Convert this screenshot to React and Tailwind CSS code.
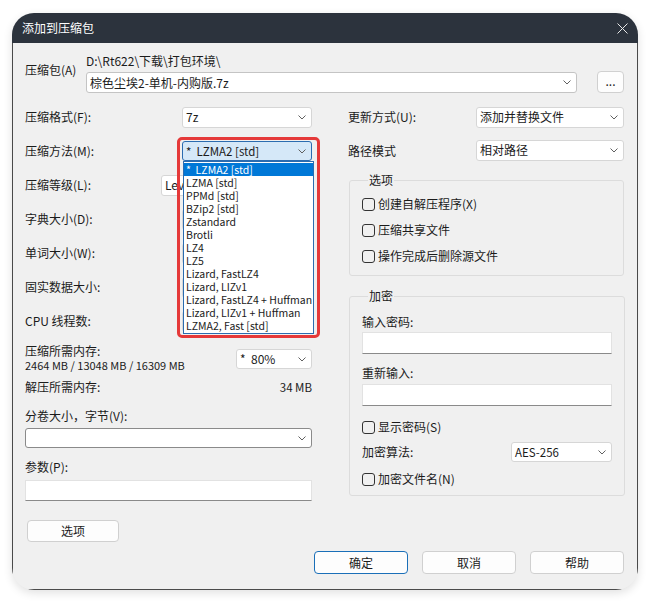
import React from 'react';

function Chevron() {
  return (
    <svg width="8" height="5" viewBox="0 0 8 5" className="shrink-0">
      <path d="M0.5 0.5 L4 4 L7.5 0.5" fill="none" stroke="#606060" strokeWidth="1" />
    </svg>
  );
}

function Combo({ className = '', children }) {
  return (
    <div className={`flex items-center justify-between rounded-[3px] border pl-[3px] pr-[5px] ${className}`}>
      <span className="whitespace-pre leading-[16px]">{children}</span>
      <Chevron />
    </div>
  );
}

function Check({ children }) {
  return (
    <div className="flex items-center gap-[3px]">
      <div className="h-[13px] w-[13px] shrink-0 rounded-[3px] border border-[#333333]" />
      <span className="leading-[16px]">{children}</span>
    </div>
  );
}

function Btn({ className = '', children }) {
  return (
    <div className={`flex items-center justify-center rounded-[4px] border bg-[#fdfdfd] leading-[16px] ${className}`}>
      {children}
    </div>
  );
}

const methods = [
  'LZMA [std]',
  'PPMd [std]',
  'BZip2 [std]',
  'Zstandard',
  'Brotli',
  'LZ4',
  'LZ5',
  'Lizard, FastLZ4',
  'Lizard, LIZv1',
  'Lizard, FastLZ4 + Huffman',
  'Lizard, LIZv1 + Huffman',
  'LZMA2, Fast [std]',
];

export default function App() {
  return (
    <div className="h-[602px] w-[650px] bg-white pl-[12px] pt-[13px] font-['Noto_Sans_CJK_SC','Noto_Sans',sans-serif] text-[12px] text-[#1b1b1b]">
      <div className="h-[577px] w-[626px] overflow-hidden rounded-[22px] bg-[#f0f0f0] shadow-[0_3px_10px_rgba(0,0,0,0.12)]">
        {/* title bar */}
        <div className="flex h-[30px] items-center justify-between bg-[#2c333d] pl-[10px] pr-[10px] text-white">
          <span className="leading-[16px]">添加到压缩包</span>
          <svg width="11" height="11" viewBox="0 0 11 11">
            <path d="M0.5 0.5 L10.5 10.5 M10.5 0.5 L0.5 10.5" stroke="#e8e8e8" strokeWidth="1" fill="none" />
          </svg>
        </div>

        {/* body */}
        <div className="relative h-[547px] border-x border-b border-[#4a4a4a] pl-[12px] pr-[13px]">
          {/* archive row */}
          <div className="flex h-[57px] pt-[11px]">
            <div className="w-[61px] pt-[8px] leading-[16px]">压缩包(A)</div>
            <div className="w-[491px]">
              <div className="-mt-[1px] h-[19px] leading-[16px]">D:\Rt622\下载\打包环境\</div>
              <Combo className="h-[21px] border-[#c4c4c4] bg-white">棕色尘埃2-单机-内购版.7z</Combo>
            </div>
            <Btn className="ml-[20px] mt-[17px] h-[22px] w-[27px] border-[#d0d0d0] pb-[3px]">...</Btn>
          </div>

          <div className="flex gap-[36px]">
            {/* left column */}
            <div className="w-[287px]">
              <div className="flex h-[34px] items-center justify-between">
                <span className="leading-[16px]">压缩格式(F):</span>
                <Combo className="h-[21px] w-[130px] border-[#d6d6d6] bg-white">7z</Combo>
              </div>
              <div className="flex h-[34px] items-center justify-between">
                <span className="leading-[16px]">压缩方法(M):</span>
                <Combo className="h-[20px] w-[130px] border-[#2b6cb0] bg-[#d5e8f8] text-[11.5px]">{'*  LZMA2 [std]'}</Combo>
              </div>
              <div className="flex h-[34px] items-center justify-between">
                <span className="leading-[16px]">压缩等级(L):</span>
                <Combo className="h-[21px] w-[151px] border-[#d6d6d6] bg-white">Level</Combo>
              </div>
              <div className="flex h-[34px] items-center justify-between">
                <span className="leading-[16px]">字典大小(D):</span>
                <Combo className="h-[21px] w-[130px] border-[#d6d6d6] bg-white">{''}</Combo>
              </div>
              <div className="flex h-[34px] items-center justify-between">
                <span className="leading-[16px]">单词大小(W):</span>
                <Combo className="h-[21px] w-[130px] border-[#d6d6d6] bg-white">{''}</Combo>
              </div>
              <div className="flex h-[34px] items-center justify-between">
                <span className="leading-[16px]">固实数据大小:</span>
                <Combo className="h-[21px] w-[130px] border-[#d6d6d6] bg-white">{''}</Combo>
              </div>
              <div className="flex h-[34px] items-center justify-between">
                <span className="leading-[16px]">CPU 线程数:</span>
                <Combo className="h-[21px] w-[130px] border-[#d6d6d6] bg-white">{''}</Combo>
              </div>
              <div className="flex h-[40px] items-start justify-between pt-[5px]">
                <div className="leading-[14px]">
                  <div className="leading-[16px]">压缩所需内存:</div>
                  <div className="-mt-[2px] text-[11px] leading-[16px]">2464 MB / 13048 MB / 16309 MB</div>
                </div>
                <Combo className="mt-[6px] h-[20px] w-[76px] border-[#d6d6d6] bg-white">{'*  80%'}</Combo>
              </div>
              <div className="flex h-[18px] items-center justify-between">
                <span className="leading-[16px]">解压所需内存:</span>
                <span className="text-[11.5px] leading-[16px]">34 MB</span>
              </div>
              <div className="h-[32px] pt-[12px] leading-[16px]">分卷大小，字节(V):</div>
              <Combo className="h-[20px] w-full border-[#8a8a8a] bg-white">{''}</Combo>
              <div className="h-[32px] pt-[11px] leading-[16px]">参数(P):</div>
              <div className="h-[21px] w-full border border-[#e2e2e2] border-b-[#8a8a8a] bg-white" />
              <Btn className="ml-[2px] mt-[19px] h-[22px] w-[92px] border-[#d0d0d0]">选项</Btn>
            </div>

            {/* right column */}
            <div className="w-[276px]">
              <div className="flex h-[34px] items-center justify-between">
                <span className="leading-[16px]">更新方式(U):</span>
                <Combo className="h-[21px] w-[148px] border-[#d6d6d6] bg-white">添加并替换文件</Combo>
              </div>
              <div className="flex h-[34px] items-center justify-between">
                <span className="leading-[16px]">路径模式</span>
                <Combo className="-mt-[2px] h-[21px] w-[148px] border-[#d6d6d6] bg-white">相对路径</Combo>
              </div>

              <fieldset className="ml-[1px] mt-[5px] h-[103px] rounded-[3px] border border-[#dcdcdc] pl-[12px]">
                <legend className="ml-[6px] px-[1px] leading-[14px]">选项</legend>
                <div className="flex flex-col pt-[4px]">
                  <div className="flex h-[26px] items-center"><Check>创建自解压程序(X)</Check></div>
                  <div className="flex h-[26px] items-center"><Check>压缩共享文件</Check></div>
                  <div className="flex h-[26px] items-center"><Check>操作完成后删除源文件</Check></div>
                </div>
              </fieldset>

              <fieldset className="ml-[1px] mt-[13px] h-[207px] rounded-[3px] border border-[#dcdcdc] pl-[12px] pr-[12px]">
                <legend className="ml-[6px] px-[1px] leading-[14px]">加密</legend>
                <div className="pt-[11px] leading-[16px]">输入密码:</div>
                <div className="mt-[2px] h-[22px] w-[250px] border border-[#e2e2e2] border-b-[#8a8a8a] bg-white" />
                <div className="mt-[11px] leading-[16px]">重新输入:</div>
                <div className="mt-[3px] h-[22px] w-[250px] border border-[#e2e2e2] border-b-[#8a8a8a] bg-white" />
                <div className="mt-[11px] flex h-[20px] items-center"><Check>显示密码(S)</Check></div>
                <div className="mt-[5px] flex h-[20px] w-[250px] items-center justify-between">
                  <span className="leading-[16px]">加密算法:</span>
                  <Combo className="h-[20px] w-[101px] border-[#d6d6d6] bg-white text-[11.5px]">AES-256</Combo>
                </div>
                <div className="mt-[7px] flex h-[20px] items-center"><Check>加密文件名(N)</Check></div>
              </fieldset>
            </div>
          </div>

          {/* bottom buttons */}
          <div className="mt-[9px] flex justify-end gap-[14px]">
            <Btn className="h-[23px] w-[94px] border-[#1a6fb8]">确定</Btn>
            <Btn className="h-[23px] w-[94px] border-[#d0d0d0]">取消</Btn>
            <Btn className="h-[23px] w-[94px] border-[#d0d0d0]">帮助</Btn>
          </div>

          {/* open dropdown list (overlay) */}
          <div className="absolute left-[170px] top-[118px] w-[131px] border border-[#2b6cb0] bg-white py-[1px] text-[10.5px]">
            <div className="h-[13px] whitespace-pre bg-[#0078d7] pl-[2px] leading-[13px] text-white">{'*  LZMA2 [std]'}</div>
            {methods.map((m) => (
              <div key={m} className="h-[13px] whitespace-pre pl-[2px] leading-[13px]">{m}</div>
            ))}
          </div>

          {/* red annotation frame */}
          <div className="pointer-events-none absolute left-[164px] top-[94px] h-[201px] w-[143px] rounded-[5px] border-[3px] border-[#e53939]" />
        </div>
      </div>
    </div>
  );
}
